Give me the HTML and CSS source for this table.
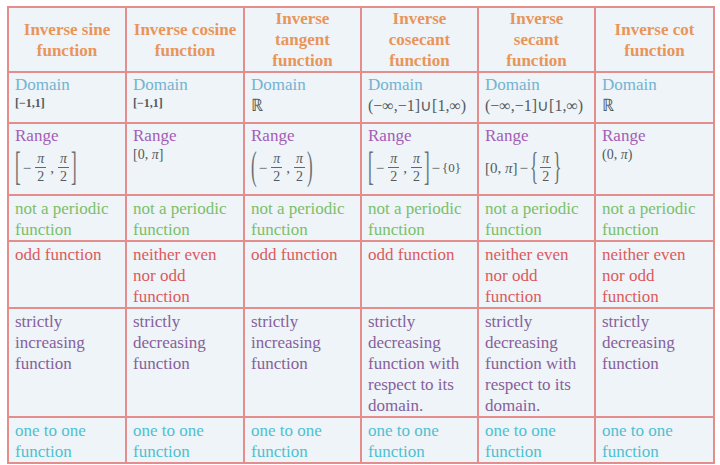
FILE: index.html
```html
<!DOCTYPE html>
<html>
<head>
<meta charset="utf-8">
<link rel="stylesheet" href="styles.css">
</head>
<body>
<table class="grid">
  <colgroup>
    <col class="c1"><col class="c2"><col class="c3"><col class="c4"><col class="c5"><col class="c6">
  </colgroup>
  <tr class="r-head">
    <th>Inverse sine<br>function</th>
    <th>Inverse cosine<br>function</th>
    <th>Inverse<br>tangent<br>function</th>
    <th>Inverse<br>cosecant<br>function</th>
    <th>Inverse<br>secant<br>function</th>
    <th>Inverse cot<br>function</th>
  </tr>
  <tr class="r-domain">
    <td><div class="lbl domain">Domain</div><div class="math sm">[−1,1]</div></td>
    <td><div class="lbl domain">Domain</div><div class="math sm">[−1,1]</div></td>
    <td><div class="lbl domain">Domain</div><div class="math reals">ℝ</div></td>
    <td><div class="lbl domain">Domain</div><div class="math">(−∞,−1]∪[1,∞)</div></td>
    <td><div class="lbl domain">Domain</div><div class="math">(−∞,−1]∪[1,∞)</div></td>
    <td><div class="lbl domain">Domain</div><div class="math reals">ℝ</div></td>
  </tr>
  <tr class="r-range">
    <td><div class="lbl range">Range</div>
      <div class="math expr"><span class="big">[</span><span class="minus">−</span><span class="frac"><i>π</i><span>2</span></span><span class="comma">,</span><span class="frac"><i>π</i><span>2</span></span><span class="big">]</span></div></td>
    <td><div class="lbl range">Range</div><div class="math small">[0, <i>π</i>]</div></td>
    <td><div class="lbl range">Range</div>
      <div class="math expr"><span class="big paren">(</span><span class="minus">−</span><span class="frac"><i>π</i><span>2</span></span><span class="comma">,</span><span class="frac"><i>π</i><span>2</span></span><span class="big paren">)</span></div></td>
    <td><div class="lbl range">Range</div>
      <div class="math expr"><span class="big">[</span><span class="minus">−</span><span class="frac"><i>π</i><span>2</span></span><span class="comma">,</span><span class="frac"><i>π</i><span>2</span></span><span class="big">]</span><span class="minus">−</span><span class="tiny">{0}</span></div></td>
    <td><div class="lbl range">Range</div>
      <div class="math expr"><span class="tiny2">[0, <i>π</i>]</span><span class="minus">−</span><span class="big brace">{</span><span class="frac"><i>π</i><span>2</span></span><span class="big brace">}</span></div></td>
    <td><div class="lbl range">Range</div><div class="math small">(0, <i>π</i>)</div></td>
  </tr>
  <tr class="r-period">
    <td class="green">not a periodic function</td>
    <td class="green">not a periodic function</td>
    <td class="green">not a periodic function</td>
    <td class="green">not a periodic function</td>
    <td class="green">not a periodic function</td>
    <td class="green">not a periodic function</td>
  </tr>
  <tr class="r-parity">
    <td class="red">odd function</td>
    <td class="red">neither even nor odd function</td>
    <td class="red">odd function</td>
    <td class="red">odd function</td>
    <td class="red">neither even nor odd function</td>
    <td class="red">neither even nor odd function</td>
  </tr>
  <tr class="r-mono">
    <td class="purple">strictly increasing function</td>
    <td class="purple">strictly decreasing function</td>
    <td class="purple">strictly increasing function</td>
    <td class="purple">strictly decreasing function with respect to its domain.</td>
    <td class="purple">strictly decreasing function with respect to its domain.</td>
    <td class="purple">strictly decreasing function</td>
  </tr>
  <tr class="r-one">
    <td class="cyan">one to one function</td>
    <td class="cyan">one to one function</td>
    <td class="cyan">one to one function</td>
    <td class="cyan">one to one function</td>
    <td class="cyan">one to one function</td>
    <td class="cyan">one to one function</td>
  </tr>
</table>
</body>
</html>
```

FILE: styles.css
```css
html, body {
  margin: 0;
  padding: 0;
  background: #ffffff;
}
body {
  padding: 6px 0 0 7px;
  font-family: "Liberation Serif", serif;
}
.grid {
  border-collapse: collapse;
  table-layout: fixed;
  width: 706px;
  background: #eef4f7;
  font-family: "Liberation Serif", serif;
  font-size: 17px;
  line-height: 21px;
}
.c1 { width: 118px; }
.c2 { width: 118px; }
.c3 { width: 117px; }
.c4 { width: 117px; }
.c5 { width: 117px; }
.c6 { width: 119px; }
.grid th, .grid td {
  border: 2px solid #e48d8d;
  vertical-align: top;
  padding: 2px 3px 0 6px;
  text-align: left;
}
.grid th {
  color: #e9955a;
  font-weight: bold;
  text-align: center;
  vertical-align: middle;
  padding: 0 2px;
  line-height: 21px;
}
.r-head { height: 65px; }
.r-domain { height: 51px; }
.r-range { height: 72px; }
.r-period { height: 43px; }
.r-parity { height: 67px; }
.r-mono { height: 107px; }
.r-one { height: 45px; }
.lbl { line-height: 20px; }
.domain { color: #72b3d2; }
.range { color: #a45cb6; }
.math {
  color: #555a5e;
  font-size: 16px;
  line-height: 22px;
  white-space: nowrap;
}
.math.sm { font-size: 12px; font-weight: bold; line-height: 16px; }
.math.reals { font-size: 17px; line-height: 22px; }
.math.small { font-size: 14px; line-height: 18px; }
.expr {
  display: flex;
  align-items: center;
  height: 43px;
  font-size: 15px;
}
.big {
  display: inline-block;
  font-size: 17px;
  transform: scaleY(2.4);
  color: #6a6e72;
}
.big.paren { transform: scaleY(2.3); }
.big.brace { transform: scaleY(2.2); }
.minus { margin: 0 2px; }
.frac {
  display: inline-flex;
  flex-direction: column;
  align-items: center;
  font-size: 14px;
  line-height: 18px;
  margin: 0 2px;
}
.frac i { border-bottom: 1px solid #666; padding: 0 2px; line-height: 17px; }
.comma { align-self: center; margin: 0 2px; }
.tiny { font-size: 13px; }
.tiny2 { font-size: 15px; }
.green { color: #7bbf6b; }
.red { color: #dc5a5e; }
.purple { color: #87609c; }
.cyan { color: #4fc0d2; }
```
